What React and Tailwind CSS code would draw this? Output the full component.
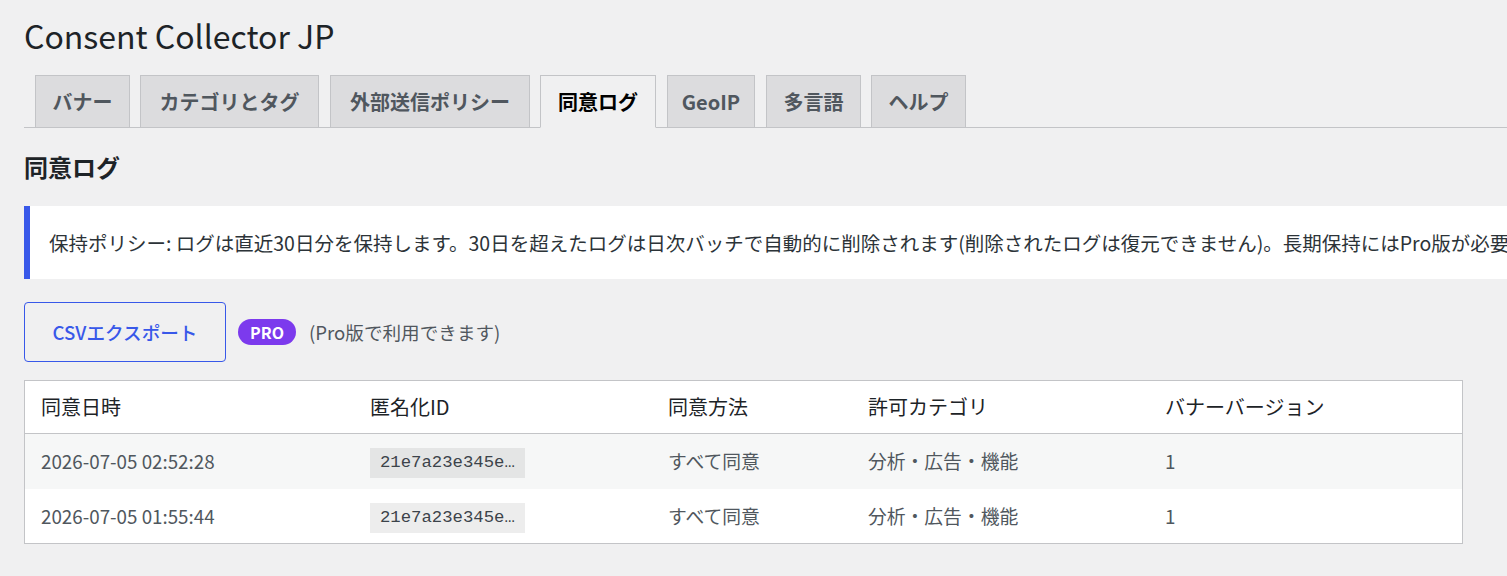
const tabs = [
  { label: 'バナー', w: 'w-[95px]', ml: 'ml-[11px]' },
  { label: 'カテゴリとタグ', w: 'w-[179px]', ml: 'ml-[10px]' },
  { label: '外部送信ポリシー', w: 'w-[200px]', ml: 'ml-[11px]' },
  { label: '同意ログ', w: 'w-[116px]', ml: 'ml-[10px]', active: true },
  { label: 'GeoIP', w: 'w-[88px]', ml: 'ml-[11px]' },
  { label: '多言語', w: 'w-[95px]', ml: 'ml-[11px]' },
  { label: 'ヘルプ', w: 'w-[95px]', ml: 'ml-[10px]' },
];

const rows = [
  { date: '2026-07-05 02:52:28', id: '21e7a23e345e…', method: 'すべて同意', cats: '分析・広告・機能', ver: '1' },
  { date: '2026-07-05 01:55:44', id: '21e7a23e345e…', method: 'すべて同意', cats: '分析・広告・機能', ver: '1' },
];

const cols = 'grid grid-cols-[329px_298px_200px_297px_1fr]';

export default function App() {
  return (
    <div className="min-h-[576px] w-full overflow-hidden bg-[#f0f0f1] pl-[24px] font-['Noto_Sans_CJK_JP',sans-serif] text-[#3c434a]">
      <h1 className="pt-[14px] text-[32px] leading-[42px] font-normal text-[#1d2327]">Consent Collector JP</h1>

      {/* tabs */}
      <nav className="mt-[19px] flex items-end border-b border-[#c3c4c7]">
        {tabs.map((t) => (
          <a
            key={t.label}
            className={`${t.w} ${t.ml} -mb-px flex h-[53px] items-center justify-center border text-[20px] font-semibold ${
              t.active
                ? 'border-[#c3c4c7] border-b-[#f0f0f1] bg-[#f0f0f1] text-black'
                : 'border-[#c3c4c7] bg-[#dcdcde] text-[#50575e]'
            }`}
          >
            {t.label}
          </a>
        ))}
      </nav>

      <h2 className="mt-[23px] text-[24px] leading-[31px] font-bold text-[#1d2327]">同意ログ</h2>

      <div className="mt-[24px] flex h-[73px] w-max items-center whitespace-nowrap border-l-[6px] border-[#3858e9] bg-white pl-[19px] pr-[20px] text-[19.5px] text-[#2c3338]">
        保持ポリシー: ログは直近30日分を保持します。30日を超えたログは日次バッチで自動的に削除されます(削除されたログは復元できません)。長期保持にはPro版が必要です。
      </div>

      <div className="mt-[23px] flex items-center">
        <button className="h-[60px] w-[202px] rounded-[4px] border border-[#3858e9] text-[18.6px] font-medium text-[#3858e9]">
          CSVエクスポート
        </button>
        <span className="ml-[12px] flex h-[26px] w-[58px] items-center justify-center rounded-full bg-[#7c3aed] text-[16px] font-bold text-white">
          PRO
        </span>
        <span className="ml-[13px] text-[18.6px] text-[#50575e]">(Pro版で利用できます)</span>
      </div>

      <div className="mr-[44px] mt-[18px] border border-[#c3c4c7] bg-white">
        <div className={`${cols} h-[53px] items-center border-b border-[#c3c4c7] text-[20px] text-[#1d2327]`}>
          <div className="pl-[16px]">同意日時</div>
          <div className="pl-[16px]">匿名化ID</div>
          <div className="pl-[16px]">同意方法</div>
          <div className="pl-[16px]">許可カテゴリ</div>
          <div className="pl-[16px]">バナーバージョン</div>
        </div>
        {rows.map((r, i) => (
          <div
            key={i}
            className={`${cols} items-center text-[18.8px] text-[#50575e] ${i === 0 ? 'h-[55px] bg-[#f6f7f7]' : 'h-[54px] bg-white'}`}
          >
            <div className="pl-[16px]">{r.date}</div>
            <div className="pl-[16px]">
              <code className="inline-block h-[30px] bg-black/[0.07] px-[10px] font-['Liberation_Mono',monospace] text-[17.3px] leading-[30px] text-[#3c434a]">
                {r.id}
              </code>
            </div>
            <div className="pl-[16px]">{r.method}</div>
            <div className="pl-[16px]">{r.cats}</div>
            <div className="pl-[16px]">{r.ver}</div>
          </div>
        ))}
      </div>
    </div>
  );
}
